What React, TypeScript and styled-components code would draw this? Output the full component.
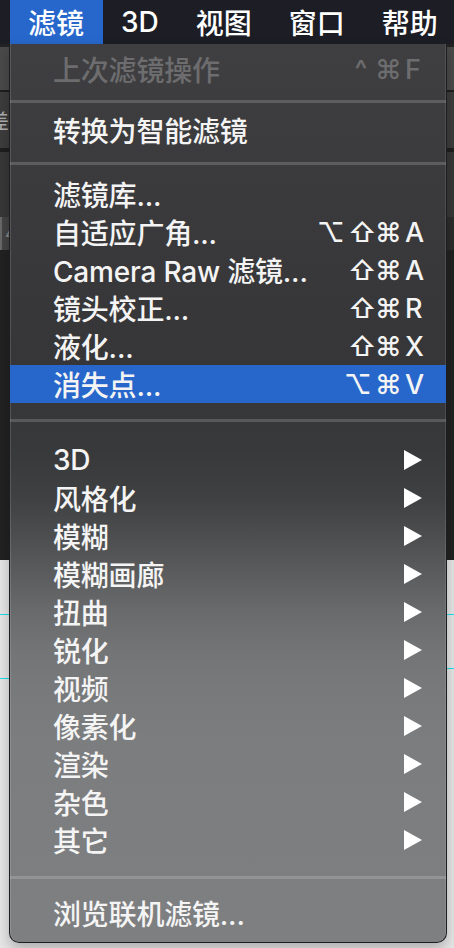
import React from "react";
import styled, { createGlobalStyle } from "styled-components";

const GlobalStyle = createGlobalStyle`
  html, body {
    margin: 0;
    padding: 0;
    background: #222222;
  }
  * {
    box-sizing: border-box;
  }
`;

const FONT = `Inter, "Noto Sans CJK SC", "Noto Sans", sans-serif`;

type Key = { k: string; w: number; letter?: boolean };

type Item =
  | { kind: "row"; label: string; keys?: Key[]; disabled?: boolean; active?: boolean; sub?: boolean }
  | { kind: "sep"; top: number; bottom: number };

const cmd: Key = { k: "⌘", w: 25 };
const shift: Key = { k: "⇧", w: 22 };
const opt: Key = { k: "⌥", w: 26 };
const ctrl: Key = { k: "^", w: 18 };
const letter = (k: string): Key => ({ k, w: 19, letter: true });

const items: Item[] = [
  { kind: "row", label: "上次滤镜操作", keys: [ctrl, cmd, letter("F")], disabled: true },
  { kind: "sep", top: 12, bottom: 8 },
  { kind: "row", label: "转换为智能滤镜" },
  { kind: "sep", top: 13, bottom: 10 },
  { kind: "row", label: "滤镜库..." },
  { kind: "row", label: "自适应广角...", keys: [opt, shift, cmd, letter("A")] },
  { kind: "row", label: "Camera Raw 滤镜...", keys: [shift, cmd, letter("A")] },
  { kind: "row", label: "镜头校正...", keys: [shift, cmd, letter("R")] },
  { kind: "row", label: "液化...", keys: [shift, cmd, letter("X")] },
  { kind: "row", label: "消失点...", keys: [opt, cmd, letter("V")], active: true },
  { kind: "sep", top: 16, bottom: 19 },
  { kind: "row", label: "3D", sub: true },
  { kind: "row", label: "风格化", sub: true },
  { kind: "row", label: "模糊", sub: true },
  { kind: "row", label: "模糊画廊", sub: true },
  { kind: "row", label: "扭曲", sub: true },
  { kind: "row", label: "锐化", sub: true },
  { kind: "row", label: "视频", sub: true },
  { kind: "row", label: "像素化", sub: true },
  { kind: "row", label: "渲染", sub: true },
  { kind: "row", label: "杂色", sub: true },
  { kind: "row", label: "其它", sub: true },
  { kind: "sep", top: 17, bottom: 15 },
  { kind: "row", label: "浏览联机滤镜..." },
];

const topMenus = ["滤镜", "3D", "视图", "窗口", "帮助"];

export default function App() {
  return (
    <>
      <GlobalStyle />
      <Screen>
        <MenuBar>
          {topMenus.map((m, i) => (
            <MenuBarItem key={m} $active={i === 0}>
              {m}
            </MenuBarItem>
          ))}
        </MenuBar>

        <Workspace>
          <Strip $h={3} $bg="#232323" />
          <Strip $h={43} $bg="#4a4a4a" />
          <Strip $h={2} $bg="#1e1e1e" />
          <OptionsBar>
            <CutText>差</CutText>
          </OptionsBar>
          <Strip $h={4} $bg="#1f1f1f" />
          <Strip $h={65} $bg="#383838" />
          <TabStrip>
            <Tab>4</Tab>
          </TabStrip>
          <Strip $h={310} $bg="#222222" />
          <Canvas>
            <Guide />
            <GuidePair>
              <HalfGuide $top={63} />
              <HalfGuide $top={53} />
            </GuidePair>
          </Canvas>
        </Workspace>

        <Dropdown>
          {items.map((it, i) =>
            it.kind === "sep" ? (
              <Separator key={i} $top={it.top} $bottom={it.bottom} />
            ) : (
              <Row key={i} $active={it.active} $disabled={it.disabled}>
                <Label>{it.label}</Label>
                {it.keys && (
                  <Shortcut>
                    {it.keys.map((k, j) => (
                      <KeyGlyph key={j} $w={k.w} $letter={k.letter}>
                        {k.k}
                      </KeyGlyph>
                    ))}
                  </Shortcut>
                )}
                {it.sub && (
                  <Arrow width="18" height="20" viewBox="0 0 18 20">
                    <polygon points="0,0 18,10 0,20" fill="#ffffff" />
                  </Arrow>
                )}
              </Row>
            )
          )}
        </Dropdown>
      </Screen>
    </>
  );
}

const Screen = styled.div`
  position: relative;
  width: 454px;
  height: 948px;
  overflow: hidden;
  font-family: ${FONT};
  background: #222222;
`;

const MenuBar = styled.div`
  display: flex;
  align-items: stretch;
  height: 44px;
  padding-left: 10px;
  background: #1c1d25;
  overflow: hidden;
`;

const MenuBarItem = styled.div<{ $active?: boolean }>`
  display: flex;
  align-items: center;
  flex-shrink: 0;
  white-space: nowrap;
  padding: 0 19px 0 18px;
  font-size: 28px;
  font-weight: 500;
  color: #ffffff;
  background: ${(p) => (p.$active ? "#2767cb" : "transparent")};
`;

const Workspace = styled.div`
  display: flex;
  flex-direction: column;
`;

const Strip = styled.div<{ $h: number; $bg: string }>`
  height: ${(p) => p.$h}px;
  background: ${(p) => p.$bg};
`;

const OptionsBar = styled.div`
  height: 56px;
  background: #3d3d3d;
  display: flex;
  align-items: center;
  overflow: hidden;
`;

const CutText = styled.span`
  margin-left: -11px;
  font-size: 20px;
  color: #b0b0b0;
`;

const TabStrip = styled.div`
  height: 33px;
  background: #2c2c2c;
  display: flex;
`;

const Tab = styled.div`
  width: 9px;
  background: #454545;
  border-left: 2px solid #6a6a6a;
  padding-left: 3px;
  font-size: 18px;
  line-height: 33px;
  color: #8a8a8a;
  overflow: hidden;
`;

const Canvas = styled.div`
  height: 388px;
  background: #e7e7e7;
  display: flex;
  flex-direction: column;
`;

const Guide = styled.div`
  margin-top: 54px;
  height: 1px;
  background: #1ee0e6;
`;

const GuidePair = styled.div`
  display: flex;
  align-items: flex-start;
`;

const HalfGuide = styled.div<{ $top: number }>`
  flex: 1;
  height: 1px;
  margin-top: ${(p) => p.$top}px;
  background: #1ee0e6;
`;

const Dropdown = styled.div`
  position: absolute;
  top: 44px;
  left: 9px;
  width: 438px;
  height: 899px;
  padding: 6px 0 11px;
  display: flex;
  flex-direction: column;
  border: 1px solid #1d1d1f;
  border-top: none;
  border-radius: 0 0 10px 10px;
  box-shadow: inset 1px 0 0 rgba(255, 255, 255, 0.14), inset -1px 0 0 rgba(255, 255, 255, 0.1),
    0 6px 14px rgba(0, 0, 0, 0.25);
  background: linear-gradient(
    to bottom,
    #3f3f41 0px,
    #3a3a3c 160px,
    #363638 320px,
    #38393b 406px,
    #3f4042 453px,
    #4c4d4f 491px,
    #5b5c5e 530px,
    #696a6c 567px,
    #737476 605px,
    #78797b 643px,
    #7c7d7f 700px,
    #7e7f81 899px
  );
`;

const Separator = styled.div<{ $top: number; $bottom: number }>`
  height: 3px;
  flex-shrink: 0;
  margin: ${(p) => p.$top}px 0 ${(p) => p.$bottom}px;
  background: rgba(255, 255, 255, 0.17);
`;

const Row = styled.div<{ $active?: boolean; $disabled?: boolean }>`
  display: flex;
  align-items: center;
  height: 38px;
  flex-shrink: 0;
  padding: 0 22px 0 43px;
  font-size: 28px;
  font-weight: 500;
  color: ${(p) => (p.$disabled ? "#6d6d6f" : "#f4f4f4")};
  background: ${(p) => (p.$active ? "#2767cb" : "transparent")};
`;

const Label = styled.span`
  flex: 1;
  white-space: nowrap;
  letter-spacing: -0.2px;
`;

const Shortcut = styled.span`
  display: flex;
  gap: 5px;
  font-size: 27px;
`;

const KeyGlyph = styled.span<{ $w: number; $letter?: boolean }>`
  display: inline-block;
  width: ${(p) => p.$w}px;
  overflow: visible;
  white-space: nowrap;
  text-align: ${(p) => (p.$letter ? "left" : "center")};
`;

const Arrow = styled.svg`
  flex-shrink: 0;
  margin-right: 2px;
`;
